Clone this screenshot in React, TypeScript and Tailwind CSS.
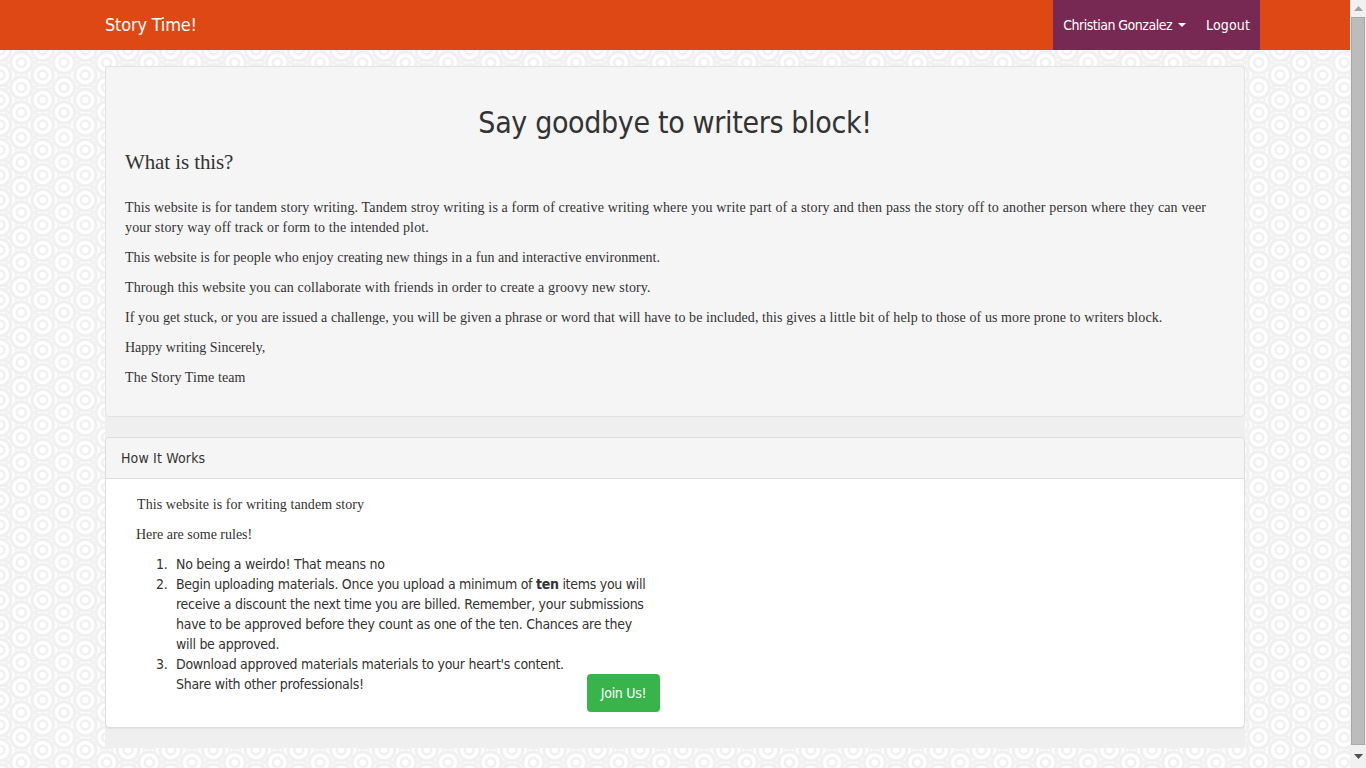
import React from "react";

const serif = "font-['Liberation_Serif',serif]";

// tile centres for the staggered rings, wrapped around the tile edges
const centres = [
    [21.33, 12.5], [-21.33, 12.5], [64, 12.5],
    [0, 0], [42.67, 0], [0, 25], [42.67, 25],
];

const Rings = () => (
    <svg className="absolute inset-0 w-full h-full" aria-hidden="true">
        <defs>
            <pattern id="rings" x="0" y="50" width="42.67" height="25" patternUnits="userSpaceOnUse">
                <rect width="42.67" height="25" fill="#ffffff" />
                {centres.map(([cx, cy], i) => (
                    <circle key={i} cx={cx} cy={cy} r="15.8" fill="none" stroke="#f0f0f0" strokeWidth="2" />
                ))}
                {centres.map(([cx, cy], i) => (
                    <g key={i}>
                        <circle cx={cx} cy={cy} r="12.5" fill="#ffffff" />
                        <circle cx={cx} cy={cy} r="10.7" fill="none" stroke="#f0f0f0" strokeWidth="3" />
                        <circle cx={cx} cy={cy} r="4.5" fill="none" stroke="#f0f0f0" strokeWidth="2.6" />
                    </g>
                ))}
            </pattern>
        </defs>
        <rect width="100%" height="100%" fill="url(#rings)" />
    </svg>
);

const Scrollbar = () => (
    <div className="w-4 shrink-0 h-full bg-[#f1f1f1] flex flex-col items-center relative z-10">
        <div className="h-[17px] flex items-center justify-center">
            <svg width="9" height="5" viewBox="0 0 9 5"><path d="M4.5 0 9 5H0z" fill="#a3a3a3" /></svg>
        </div>
        <div className="w-[14px] h-[728px] bg-[#bcbcbc] border border-[#a8a8a8]" />
        <div className="flex-1 flex items-center justify-center">
            <svg width="9" height="5" viewBox="0 0 9 5"><path d="M0 0h9L4.5 5z" fill="#505050" /></svg>
        </div>
    </div>
);

const rules = [
    <>No being a weirdo! That means no</>,
    <>Begin uploading materials. Once you upload a minimum of <b>ten</b> items you will receive a discount the next time you are billed. Remember, your submissions have to be approved before they count as one of the ten. Chances are they will be approved.</>,
    <>Download approved materials materials to your heart's content.<br />Share with other professionals!</>,
];

const App = () => {
    return (
        <div className="h-screen flex overflow-hidden bg-white text-[#333333] text-sm leading-5 font-['DejaVu_Sans_Condensed','DejaVu_Sans',sans-serif]">
            <div className="flex-1 relative overflow-hidden">
                <Rings />
                <div className="relative">
                    <nav className="h-[50px] bg-[#dd4814] text-white">
                        <div className="w-[1170px] mx-auto px-[15px] flex items-center justify-between h-full">
                            <a className="text-lg tracking-[-0.2px]">Story Time!</a>
                            <div className="h-full flex items-center bg-[#772953] mr-[-15px]">
                                <a className="px-2.5 flex items-center gap-[6px] tracking-[-0.5px]">
                                    Christian Gonzalez
                                    <span className="w-0 h-0 border-x-4 border-x-transparent border-t-4 border-t-white" />
                                </a>
                                <a className="px-2.5 tracking-[0.15px]">Logout</a>
                            </div>
                        </div>
                    </nav>

                    <main className="w-[1140px] mx-auto mt-4 bg-[#efefef] pb-5">
                        <section className="h-[351px] bg-[#f5f5f5] border border-[#e3e3e3] rounded px-[19px] pt-[34px] mb-5">
                            <h1 className="text-[30px] leading-[43px] text-center tracking-[-0.35px]">Say goodbye to writers block!</h1>
                            <h3 className={`${serif} text-[21px] leading-[23px] mt-[7px] mb-[24px] tracking-[-0.1px]`}>What is this?</h3>
                            <div className={`${serif} flex flex-col gap-2.5`}>
                                <p className="tracking-[0.14px]">This website is for tandem story writing. Tandem stroy writing is a form of creative writing where you write part of a story and then pass the story off to another person where they can veer your story way off track or form to the intended plot.</p>
                                <p className="tracking-[0.05px]">This website is for people who enjoy creating new things in a fun and interactive environment.</p>
                                <p className="tracking-[0.12px]">Through this website you can collaborate with friends in order to create a groovy new story.</p>
                                <p className="tracking-[0.08px]">If you get stuck, or you are issued a challenge, you will be given a phrase or word that will have to be included, this gives a little bit of help to those of us more prone to writers block.</p>
                                <p>Happy writing Sincerely,</p>
                                <p className="tracking-[0.1px]">The Story Time team</p>
                            </div>
                        </section>

                        <section className="bg-white border border-[#dddddd] rounded shadow-[0_1px_1px_rgba(0,0,0,0.05)]">
                            <div className="h-[41px] bg-[#f5f5f5] border-b border-[#dddddd] rounded-t px-[15px] flex items-center tracking-[0.15px]">How It Works</div>
                            <div className="pl-[30px] pt-4 pb-[15px] w-[555px]">
                                <p className={`${serif} pl-px mb-2.5 tracking-[0.08px]`}>This website is for writing tandem story</p>
                                <p className={`${serif} mb-[9px]`}>Here are some rules!</p>
                                <ol className="pl-5 w-[510px] tracking-[-0.28px]">
                                    {rules.map((rule, i) => (
                                        <li key={i} className="flex">
                                            <span className="w-5 shrink-0">{i + 1}.</span>
                                            <div>{rule}</div>
                                        </li>
                                    ))}
                                </ol>
                                <div className="flex justify-end -mt-5 w-[524px]">
                                    <a className="h-[38px] w-[73px] flex items-center justify-center bg-[#38b44a] text-white rounded tracking-[-0.3px]">Join Us!</a>
                                </div>
                            </div>
                        </section>
                    </main>
                </div>
            </div>
            <Scrollbar />
        </div>
    );
};

export default App;
